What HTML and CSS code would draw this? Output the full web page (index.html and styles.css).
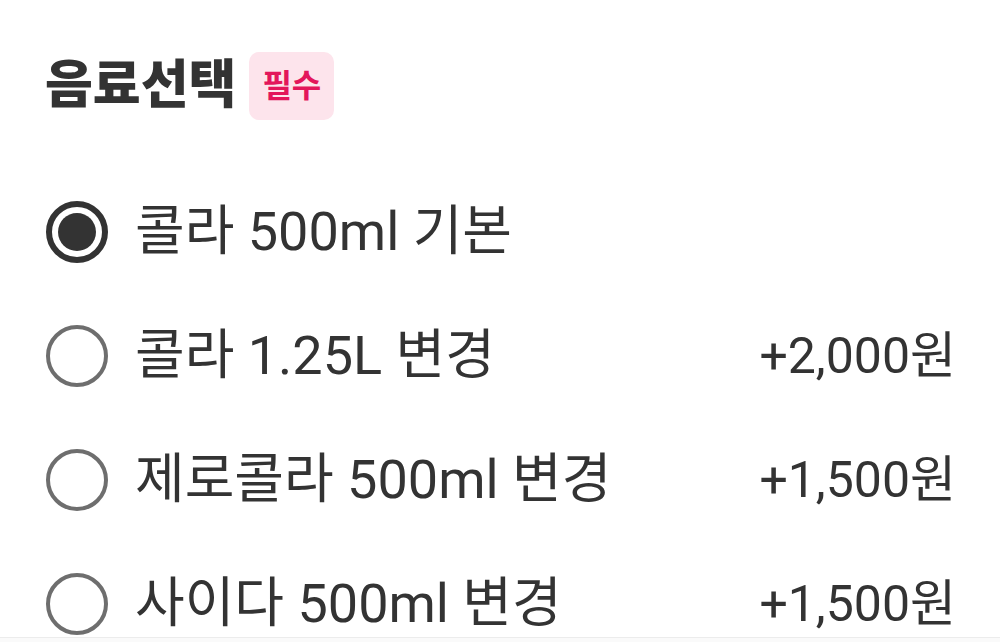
FILE: index.html
```html
<!DOCTYPE html>
<html lang="ko">
<head>
<meta charset="utf-8">
<link rel="stylesheet" href="styles.css">
</head>
<body>
<div class="page">
  <div class="header">
    <h2 class="title">음료선택</h2>
    <span class="badge">필수</span>
  </div>
  <ul class="options">
    <li class="option">
      <span class="radio checked"></span>
      <span class="label">콜라 500ml 기본</span>
    </li>
    <li class="option">
      <span class="radio"></span>
      <span class="label">콜라 1.25L 변경</span>
      <span class="price">+2,000원</span>
    </li>
    <li class="option">
      <span class="radio"></span>
      <span class="label">제로콜라 500ml 변경</span>
      <span class="price">+1,500원</span>
    </li>
    <li class="option">
      <span class="radio"></span>
      <span class="label">사이다 500ml 변경</span>
      <span class="price">+1,500원</span>
    </li>
  </ul>
</div>
<div class="bottom-edge"></div>
</body>
</html>
```
FILE: styles.css
```css
html, body {
  margin: 0;
  padding: 0;
  background: #ffffff;
  overflow: hidden;
}
body {
  font-family: Roboto, "Noto Sans CJK KR", sans-serif;
  color: #333333;
}
.page {
  padding: 52px 44px 0 45px;
}
.header {
  display: flex;
  align-items: center;
  gap: 13px;
  height: 68px;
}
.title {
  margin: 0;
  font-size: 52px;
  font-weight: 800;
  color: #333333;
  line-height: 1;
}
.badge {
  display: flex;
  align-items: center;
  justify-content: center;
  height: 68px;
  padding: 0 13px;
  box-sizing: border-box;
  background: #fde4ec;
  color: #e3165b;
  border-radius: 10px;
  font-size: 32px;
  font-weight: 700;
  line-height: 1;
}
.options {
  list-style: none;
  margin: 50px 0 0 0;
  padding: 0;
}
.option {
  display: flex;
  align-items: center;
  height: 124px;
  font-size: 54px;
}
.radio {
  flex: none;
  width: 62px;
  height: 62px;
  box-sizing: border-box;
  border: 4px solid #6e6e6e;
  border-radius: 50%;
  margin-left: 1px;
  margin-right: 27px;
  position: relative;
}
.radio.checked {
  border: 6px solid #333333;
}
.radio.checked::after {
  content: "";
  position: absolute;
  left: 6px;
  top: 6px;
  width: 38px;
  height: 38px;
  border-radius: 50%;
  background: #333333;
}
.label {
  flex: 1;
  line-height: 1;
}
.price {
  font-size: 50px;
  line-height: 1;
}
.bottom-edge {
  position: fixed;
  left: 0;
  right: 0;
  bottom: 0;
  height: 4px;
  background: #fafafa;
  border-top: 1px solid #ececec;
}
```
